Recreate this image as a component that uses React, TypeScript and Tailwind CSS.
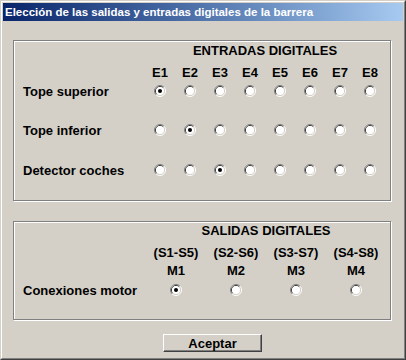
const font = { fontFamily: '"Liberation Sans", Arial, sans-serif' };

function Radio({ checked = false }: { checked?: boolean }) {
    return (
        <svg width="12" height="12" viewBox="0 0 12 12" className="block">
            <path d="M2.11 9.89 A5.5 5.5 0 0 1 9.89 2.11" stroke="#808080" fill="none" />
            <path d="M9.89 2.11 A5.5 5.5 0 0 1 2.11 9.89" stroke="#ffffff" fill="none" />
            <path d="M2.82 9.18 A4.5 4.5 0 0 1 9.18 2.82" stroke="#404040" fill="none" />
            <path d="M9.18 2.82 A4.5 4.5 0 0 1 2.82 9.18" stroke="#d4d0c8" fill="none" />
            <circle cx="6" cy="6" r="4" fill="#ffffff" />
            {checked && <circle cx="6" cy="6" r="2" fill="#000000" />}
        </svg>
    );
}

const entradas = ["E1", "E2", "E3", "E4", "E5", "E6", "E7", "E8"];

const filas = [
    { label: "Tope superior", sel: 0, mt: "mt-[1px]" },
    { label: "Tope inferior", sel: 1, mt: "mt-[19px]" },
    { label: "Detector coches", sel: 2, mt: "mt-[20px]" },
];

const salidas = [
    { rango: "(S1-S5)", m: "M1" },
    { rango: "(S2-S6)", m: "M2" },
    { rango: "(S3-S7)", m: "M3" },
    { rango: "(S4-S8)", m: "M4" },
];

export default function App() {
    return (
        <div
            className="w-[406px] h-[360px] bg-[#d4d0c8] border border-t-[#d4d0c8] border-l-[#d4d0c8] border-r-[#404040] border-b-[#404040]"
            style={font}
        >
            <div className="h-full border border-t-white border-l-white border-r-[#808080] border-b-[#808080] p-[1px] flex flex-col">

                {/* title bar */}
                <div className="h-[18px] bg-linear-to-r from-[#0a246a] to-[#a6caf0] flex items-center pl-[2px]">
                    <span className="text-white font-bold text-[11.5px] leading-[18px]">
                        Elección de las salidas y entradas digitales de la barrera
                    </span>
                </div>

                {/* entradas */}
                <div className="ml-[10px] mt-[19px] w-[378px] border border-[#808080] shadow-[inset_1px_1px_0_#fff,1px_1px_0_#fff] pt-[2px] pb-[20px] text-black font-bold text-[13px] leading-[15px]">
                    <div className="grid grid-cols-[131px_repeat(8,30px)]">
                        <div />
                        <div className="col-span-8 text-center h-[15px]">ENTRADAS DIGITALES</div>
                    </div>
                    <div className="grid grid-cols-[131px_repeat(8,30px)] mt-[7px] h-[15px]">
                        <div />
                        {entradas.map((e) => (
                            <div key={e} className="text-center">{e}</div>
                        ))}
                    </div>
                    {filas.map((f) => (
                        <div key={f.label} className={`grid grid-cols-[131px_repeat(8,30px)] h-[20px] items-center ${f.mt}`}>
                            <div className="pl-[9px]">{f.label}</div>
                            {entradas.map((e, i) => (
                                <div key={e} className="flex justify-center">
                                    <Radio checked={i === f.sel} />
                                </div>
                            ))}
                        </div>
                    ))}
                </div>

                {/* salidas */}
                <div className="ml-[10px] mt-[20px] w-[378px] border border-[#808080] shadow-[inset_1px_1px_0_#fff,1px_1px_0_#fff] pt-[1px] pb-[19px] text-black font-bold text-[13px] leading-[15px]">
                    <div className="grid grid-cols-[132px_repeat(4,60px)]">
                        <div />
                        <div className="col-span-4 text-center h-[15px]">SALIDAS DIGITALES</div>
                    </div>
                    <div className="grid grid-cols-[132px_repeat(4,60px)] mt-[7px] h-[15px]">
                        <div />
                        {salidas.map((s) => (
                            <div key={s.rango} className="text-center">{s.rango}</div>
                        ))}
                    </div>
                    <div className="grid grid-cols-[132px_repeat(4,60px)] mt-[3px] h-[15px]">
                        <div />
                        {salidas.map((s) => (
                            <div key={s.m} className="text-center">{s.m}</div>
                        ))}
                    </div>
                    <div className="grid grid-cols-[132px_repeat(4,60px)] mt-[2px] h-[20px] items-center">
                        <div className="pl-[9px]">Conexiones motor</div>
                        {salidas.map((s, i) => (
                            <div key={s.m} className="flex justify-center">
                                <Radio checked={i === 0} />
                            </div>
                        ))}
                    </div>
                </div>

                {/* boton */}
                <div className="mt-[14px] pl-[160px]">
                    <button className="w-[99px] h-[18px] border border-t-white border-l-white border-r-[#404040] border-b-[#404040] shadow-[inset_-1px_-1px_0_#808080] bg-[#d4d0c8] text-black font-bold text-[13px] leading-[15px] flex items-center justify-center">
                        Aceptar
                    </button>
                </div>

            </div>
        </div>
    );
}
